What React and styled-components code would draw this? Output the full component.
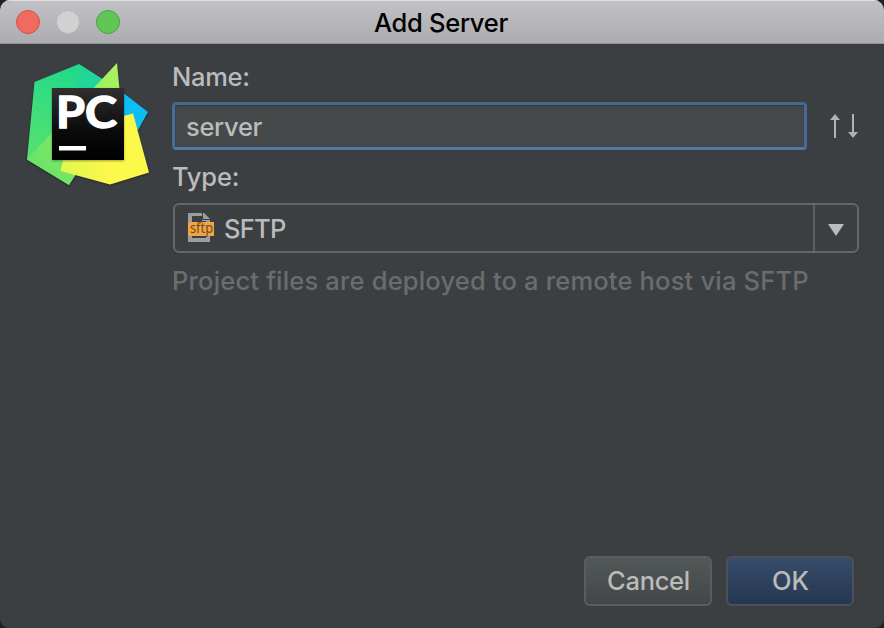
import React from "react";
import styled, { createGlobalStyle } from "styled-components";

const GlobalStyle = createGlobalStyle`
  * { box-sizing: border-box; }
  body { margin: 0; background: #1f2022; }
`;

const Dialog = styled.main`
  width: 884px;
  height: 628px;
  display: flex;
  flex-direction: column;
  overflow: hidden;
  border-radius: 10px 10px 9px 9px;
  background: #3c3f41;
  color: #bbbbbb;
  font-family: Inter, "Liberation Sans", sans-serif;
  font-size: 25.5px;
  font-weight: 450;
`;

const TitleBar = styled.header`
  flex: none;
  height: 44px;
  display: grid;
  grid-template-columns: 1fr auto 1fr;
  align-items: center;
  padding: 1px 16px 0;
  background: linear-gradient(#c2c1c5, #acabaf);
  border-bottom: 1px solid #929194;
  box-shadow: inset 0 1px 0 #dedde0;
`;

const Lights = styled.div`
  display: flex;
  gap: 16px;
`;

const Light = styled.span`
  width: 24px;
  height: 24px;
  border-radius: 50%;
  background: ${(p) => p.$fill};
  border: 1px solid ${(p) => p.$edge};
`;

const Title = styled.h1`
  margin: 2px 2px 0 0;
  color: #000;
  font-size: 25.5px;
  font-weight: 450;
  line-height: 32px;
  letter-spacing: -0.3px;
`;

const Body = styled.section`
  flex: 1;
  display: flex;
  padding: 17px 25px 0 24px;
`;

const Logo = styled.svg`
  flex: none;
  width: 128px;
  height: 128px;
  margin-right: 20px;
`;

const Form = styled.div`
  flex: 1;
  display: flex;
  flex-direction: column;
`;

const Text = styled.span`
  line-height: 32px;
  white-space: nowrap;
  letter-spacing: ${(p) => p.$track || 0}px;
`;

const Label = styled(Text)`
  display: block;
`;

const NameRow = styled.div`
  display: flex;
  align-items: center;
  margin: 9px 0 11px;
`;

const NameField = styled.div`
  width: 635px;
  height: 48px;
  display: flex;
  align-items: center;
  padding: 2px 0 0 11px;
  border: 3px solid #466d98;
  border-top-color: #45688e;
  border-bottom-color: #4f7aa8;
  border-radius: 4px;
  background: #45494a;
  box-shadow: inset 0 1px 2px #303942;
`;

const SortArrows = styled.svg`
  width: 30px;
  height: 26px;
  margin-left: 22px;
`;

const Combo = styled.div`
  width: 686px;
  height: 50px;
  margin: 10px 0 12px 1px;
  display: flex;
  border: 2px solid #646566;
  border-radius: 6px;
`;

const ComboValue = styled.div`
  flex: 1;
  display: flex;
  align-items: center;
  gap: 10px;
  padding: 2px 0 0 13px;
`;

const ComboArrow = styled.div`
  width: 44px;
  display: flex;
  align-items: center;
  justify-content: center;
  padding-top: 4px;
  border-left: 2px solid #5e6061;
`;

const Hint = styled(Label)`
  color: #6b6c6d;
`;

const Footer = styled.footer`
  display: flex;
  justify-content: flex-end;
  gap: 14px;
  padding: 0 30px 22px;
`;

const Button = styled.button`
  width: 128px;
  height: 50px;
  padding: 0 0 1px 1px;
  border: 2px solid ${(p) => (p.$primary ? "#4c5057" : "#5a5d5f")};
  border-radius: 6px;
  background: ${(p) => (p.$primary ? "linear-gradient(#364d6b, #273750)" : "linear-gradient(#525758, #434748)")};
  color: #bbbbbb;
  font: inherit;
`;

function PyCharmLogo() {
  return (
    <Logo viewBox="24 61 128 128">
      <defs>
        <linearGradient id="green" x1="0.6" y1="0" x2="0.4" y2="1">
          <stop offset="0" stopColor="#22da8b" />
          <stop offset="0.5" stopColor="#43de79" />
          <stop offset="1" stopColor="#5be36c" />
        </linearGradient>
        <linearGradient id="teal" x1="0" y1="0" x2="1" y2="0.3">
          <stop offset="0" stopColor="#22d893" />
          <stop offset="1" stopColor="#1fd0ad" />
        </linearGradient>
        <linearGradient id="lime" x1="0" y1="1" x2="1" y2="0">
          <stop offset="0" stopColor="#62e16a" />
          <stop offset="1" stopColor="#b0f25d" />
        </linearGradient>
        <linearGradient id="yellow" x1="0" y1="0.6" x2="1" y2="0.3">
          <stop offset="0" stopColor="#e1f750" />
          <stop offset="0.45" stopColor="#fcf84a" />
          <stop offset="1" stopColor="#fcf84a" />
        </linearGradient>
        <linearGradient id="black" x1="0" y1="0" x2="0" y2="1">
          <stop offset="0" stopColor="#303030" />
          <stop offset="0.6" stopColor="#0a0a0a" />
          <stop offset="1" stopColor="#000" />
        </linearGradient>
        <filter id="shadow" x="-20%" y="-20%" width="140%" height="140%" colorInterpolationFilters="sRGB">
          <feDropShadow dx="0" dy="1" stdDeviation="1" floodColor="#000" floodOpacity="0.35" />
        </filter>
      </defs>
      <g filter="url(#shadow)">
        <path d="M122 92 148 112 138 130 118 130Z" fill="#0dbdf4" />
        <path d="M34.500 82 79 64 79 160 69 185 27 159.500Z" fill="url(#green)" />
        <path d="M79 64 77 88 77 160 110 160 118 91 101 78Z" fill="url(#teal)" />
        <path d="M27 159.500 117 63 121 105 69 185Z" fill="url(#lime)" />
        <path d="M60.500 171 70 130 133 113.500 149 172.500 110 184.500Z" fill="url(#yellow)" />
      </g>
      <rect x="52" y="88" width="72" height="72" fill="url(#black)" filter="url(#shadow)" />
      <g fill="#fff" stroke="#fff" strokeWidth="1.400" fontFamily="Lato, sans-serif" fontWeight="700" fontSize="43">
        <text x="56" y="128.300" textLength="29" lengthAdjust="spacingAndGlyphs">P</text>
        <text x="85" y="128.300" textLength="32" lengthAdjust="spacingAndGlyphs">C</text>
      </g>
      <rect x="59" y="146" width="27" height="4.500" fill="#fff" />
    </Logo>
  );
}

function SftpIcon() {
  return (
    <svg width="26" height="32" viewBox="188 211 26 32">
      <path d="M188 210H203L210 217V240H188Z" fill="#9b9d9e" />
      <path d="M192 214H202V219H206V236H192Z" fill="#3c3f41" />
      <path d="M202.500 210V217.500H210" fill="none" stroke="#3c3f41" strokeWidth="1" />
      <path d="M203.500 211V216.500H209Z" fill="#9b9d9e" />
      <rect x="188" y="220" width="26" height="14" fill="#efa544" />
      <text x="190" y="230.500" fill="#6b4a27" fontFamily="Noto Sans, sans-serif" fontSize="13.500" fontWeight="400" textLength="23" lengthAdjust="spacingAndGlyphs">sftp</text>
    </svg>
  );
}

export default function App() {
  return (
    <>
      <GlobalStyle />
      <Dialog>
        <TitleBar>
          <Lights>
            <Light $fill="#f06a60" $edge="#d0544c" />
            <Light $fill="#d2d1d2" $edge="#b8b7b9" />
            <Light $fill="#60c656" $edge="#47a741" />
          </Lights>
          <Title>Add Server</Title>
        </TitleBar>
        <Body>
          <PyCharmLogo />
          <Form>
            <Label $track={-0.3}>Name:</Label>
            <NameRow>
              <NameField>
                <Text $track={-0.3}>server</Text>
              </NameField>
              <SortArrows viewBox="829 113 30 26">
                <path d="M835 114 840 120H836V138H834V120H830Z M852 114H854V132H858L853 138 848 132H852Z" fill="#afb1b3" />
              </SortArrows>
            </NameRow>
            <Label $track={-0.2}>Type:</Label>
            <Combo>
              <ComboValue>
                <SftpIcon />
                <Text $track={-0.7}>SFTP</Text>
              </ComboValue>
              <ComboArrow>
                <svg width="16" height="12" viewBox="0 0 16 12">
                  <path d="M0 0H16L8 12Z" fill="#bbbbbb" />
                </svg>
              </ComboArrow>
            </Combo>
            <Hint $track={0.18}>Project files are deployed to a remote host via SFTP</Hint>
          </Form>
        </Body>
        <Footer>
          <Button>
            <Text $track={-0.3}>Cancel</Text>
          </Button>
          <Button $primary>
            <Text>OK</Text>
          </Button>
        </Footer>
      </Dialog>
    </>
  );
}
